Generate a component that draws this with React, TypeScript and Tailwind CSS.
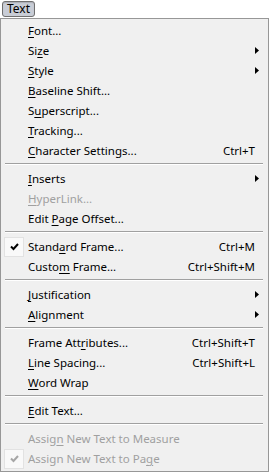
import React from "react";

type Item =
  | { sep: true }
  | {
      sep?: false;
      label: string;
      u: number;
      shortcut?: string;
      sub?: boolean;
      disabled?: boolean;
      checked?: boolean;
    };

const items: Item[] = [
  { label: "Font...", u: 0 },
  { label: "Size", u: 2, sub: true },
  { label: "Style", u: 0, sub: true },
  { label: "Baseline Shift...", u: 0 },
  { label: "Superscript...", u: 1 },
  { label: "Tracking...", u: 0 },
  { label: "Character Settings...", u: 0, shortcut: "Ctrl+T" },
  { sep: true },
  { label: "Inserts", u: 0, sub: true },
  { label: "HyperLink...", u: 0, disabled: true },
  { label: "Edit Page Offset...", u: 5 },
  { sep: true },
  { label: "Standard Frame...", u: 5, shortcut: "Ctrl+M", checked: true },
  { label: "Custom Frame...", u: 5, shortcut: "Ctrl+Shift+M" },
  { sep: true },
  { label: "Justification", u: 0, sub: true },
  { label: "Alignment", u: 0, sub: true },
  { sep: true },
  { label: "Frame Attributes...", u: 9, shortcut: "Ctrl+Shift+T" },
  { label: "Line Spacing...", u: 0, shortcut: "Ctrl+Shift+L" },
  { label: "Word Wrap", u: 0 },
  { sep: true },
  { label: "Edit Text...", u: 0 },
  { sep: true },
  { label: "Assign New Text to Measure", u: 5, disabled: true },
  { label: "Assign New Text to Page", u: 21, disabled: true, checked: true },
];

function Label({ text, u }: { text: string; u: number }) {
  return (
    <span className="whitespace-pre">
      {text.slice(0, u)}
      <u className="underline underline-offset-[2px]">{text.slice(u, u + 1)}</u>
      {text.slice(u + 1)}
    </span>
  );
}

function Check({ disabled }: { disabled?: boolean }) {
  return (
    <div className="absolute left-[3px] top-0 w-[20px] h-[20px] border border-[#e2e2e2] bg-[#f9f9f9] flex items-center justify-center">
      <svg width="9" height="8" viewBox="0 0 9 8">
        <path
          d="M1 3.5 L3.5 6 L8 1"
          fill="none"
          stroke={disabled ? "#a6a6a6" : "#000"}
          strokeWidth="2"
        />
      </svg>
    </div>
  );
}

export default function App() {
  return (
    <div
      className="w-[269px] h-[472px] bg-white relative text-[11.5px] text-black"
      style={{ fontFamily: '"Noto Sans", "Liberation Sans", sans-serif' }}
    >
      <div className="h-[18px] flex items-start pl-[2px] pt-[1px]">
        <div className="h-[16px] w-[33px] rounded-[3px] border border-[#707070] bg-[#c9cdd6] flex items-center justify-center leading-none text-[12px] shadow-[inset_0_1px_1px_rgba(0,0,0,0.15)]">
          Text
        </div>
      </div>
      <div className="w-[269px] h-[454px] border border-[#979797] bg-[#f0f0f0] py-[2px]">
        {items.map((it, i) =>
          it.sep ? (
            <div key={i} className="h-[8px] pt-[2px] pl-[4px] pr-[5px]">
              <div className="border-t border-[#a0a0a0] border-b border-b-white" />
            </div>
          ) : (
            <div
              key={i}
              className={`relative h-[20px] flex items-center pl-[27px] pr-[13px] leading-none ${
                it.disabled ? "text-[#a0a0a0]" : "text-black"
              }`}
            >
              {it.checked && <Check disabled={it.disabled} />}
              <Label text={it.label} u={it.u} />
              <div className="flex-1" />
              {it.shortcut && <span className="whitespace-pre">{it.shortcut}</span>}
              {it.sub && (
                <svg className="absolute right-[9px] top-[6px]" width="4" height="7" viewBox="0 0 4 7">
                  <path d="M0 0 L4 3.5 L0 7 Z" fill="#000" />
                </svg>
              )}
            </div>
          )
        )}
      </div>
    </div>
  );
}
